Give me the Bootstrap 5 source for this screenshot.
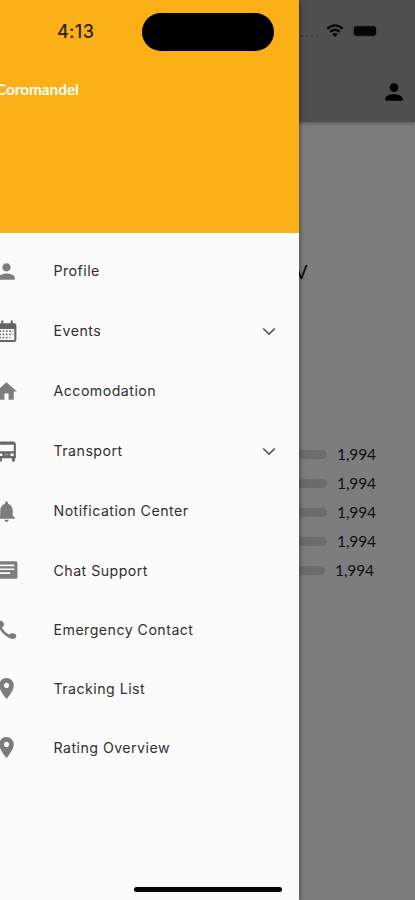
<!DOCTYPE html>
<html lang="en">
<head>
<meta charset="utf-8">
<meta name="viewport" content="width=device-width, initial-scale=1">
<title>Coromandel</title>
<link href="https://cdn.jsdelivr.net/npm/bootstrap@5.3.0/dist/css/bootstrap.min.css" rel="stylesheet">
<style>
  body { font-family: Inter, "Liberation Sans", sans-serif; background: #7d7d7d; }
  .phone { width: 415px; height: 900px; color: #0a0a0a; }
  .topbar { height: 122px; background: #4f4f4f; box-shadow: 0 1px 4px rgba(0,0,0,.35); }
  .status-right { height: 62px; padding-right: 35px; gap: 7px; }
  .signal { gap: 3px; padding-top: 9px; margin-right: 1px; }
  .signal i { width: 2px; height: 2px; border-radius: 50%; background: #383838; }
  .account { height: 60px; padding: 0 8px 0 0; }
  .page-title { height: 26px; margin-top: 137px; padding-left: 295px; font: 18.5px/26px Lato, sans-serif; }
  .stats { margin-top: 155px; }
  .stat { height: 29.1px; font: 400 15.5px/29px Lato, sans-serif; letter-spacing: -.1px; color: #111; }
  .track { width: 327px; height: 9px; border-radius: 5px; background: #6c6c6c; margin-right: 10px; }
  .stat:last-child .track { width: 325px; }
  .drawer { width: 298.5px; background: #fbfbfb; box-shadow: 0 0 6px rgba(0,0,0,.55); }
  .drawer-head { height: 233px; background: #fcb017; }
  .clock { height: 62px; padding-left: 57px; font-size: 18px; letter-spacing: .3px; font-weight: 500; line-height: 63px; color: #30230a; }
  .brand { margin-left: -4px; padding-top: 16px; font: 700 15.3px/22px Lato, sans-serif; letter-spacing: 0; color: #fff; }
  .menu { padding-top: 8px; }
  .entry { height: 60px; padding-right: 23px; font-size: 14.2px; letter-spacing: .46px; color: #303030; }
  .entry:nth-child(n+6) { height: 59px; }
  .entry .glyph { width: 25px; height: 25px; margin-left: -5.7px; margin-right: 34.2px; fill: #7d7d7d; flex: none; }
  .island { left: 142px; top: 12.5px; width: 132px; height: 38.5px; background: #000; }
  .home-bar { left: 134px; bottom: 8px; width: 148px; height: 5px; background: #050505; }
</style>
</head>
<body>
<div class="phone position-relative overflow-hidden">
  <main>
    <header class="topbar">
      <div class="status-right d-flex align-items-center justify-content-end">
        <div class="signal d-flex"><i></i><i></i><i></i><i></i></div>
        <svg width="18" height="14" viewBox="0 0 18 14" fill="none" stroke="#080808" stroke-width="2.3"><path d="M1.3 4.8Q9-2 16.7 4.8M4.2 7.8Q9 3.7 13.8 7.8"/><path d="M6.2 10.2Q9 7.7 11.8 10.2L9 13z" fill="#080808" stroke="none"/></svg>
        <svg width="29" height="14" viewBox="0 0 29 14"><rect x="1" y="1" width="25" height="12" rx="4" fill="#444"/><rect x="3" y="2.3" width="22" height="9.5" rx="2.5" fill="#050505"/><path d="M27 5v4q3-2 0-4" fill="#444"/></svg>
      </div>
      <div class="account d-flex align-items-center justify-content-end">
        <svg width="26" height="26" viewBox="0 0 24 24"><circle cx="12" cy="8" r="4"/><path d="M12 14c-2.67 0-8 1.34-8 4v2h16v-2c0-2.66-5.33-4-8-4z"/></svg>
      </div>
    </header>
    <div class="page-title">V</div>
    <div class="stats">
      <div class="stat d-flex align-items-center"><div class="track"></div>1,994</div>
      <div class="stat d-flex align-items-center"><div class="track"></div>1,994</div>
      <div class="stat d-flex align-items-center"><div class="track"></div>1,994</div>
      <div class="stat d-flex align-items-center"><div class="track"></div>1,994</div>
      <div class="stat d-flex align-items-center"><div class="track"></div>1,994</div>
    </div>
  </main>

  <aside class="drawer position-absolute top-0 start-0 h-100">
    <div class="drawer-head">
      <div class="clock">4:13</div>
      <div class="brand">Coromandel</div>
    </div>
    <nav class="menu d-flex flex-column">
      <div class="entry d-flex align-items-center">
        <svg class="glyph" viewBox="0 0 24 24"><path d="M12 12c2.21 0 4-1.79 4-4s-1.79-4-4-4-4 1.79-4 4 1.79 4 4 4zm0 2c-2.67 0-8 1.34-8 4v2h16v-2c0-2.66-5.33-4-8-4z"/></svg>Profile</div>
      <div class="entry d-flex align-items-center">
        <svg class="glyph" viewBox="0 0 24 24"><path fill="#646464" fill-rule="evenodd" d="M7 1.500h2V4h7V1.500h2V4h1.500Q21.500 4 21.500 6v14q0 2-2 2H4q-2 0-2-2V6q0-2 2-2h3zM4 9.500v10.700h15.500V9.500z"/><path fill="none" stroke="#777" stroke-width="1.700" stroke-dasharray="1.700 1.500" d="M5 11.700h13.500M5 14.800h13.500M5 17.900h10.500"/></svg>Events
        <svg class="ms-auto" width="14" height="9" viewBox="0 0 14 9" fill="none" stroke="#555" stroke-width="1.700"><path d="M1.200 1.500 7 7l5.800-5.500"/></svg></div>
      <div class="entry d-flex align-items-center">
        <svg class="glyph" viewBox="0 0 24 24"><path d="M10 20v-6h4v6h5v-8h3L12 3 2 12h3v8z"/></svg>Accomodation</div>
      <div class="entry d-flex align-items-center">
        <svg class="glyph" viewBox="0 0 24 24"><path fill="#666" fill-rule="evenodd" d="M7 2.500h11q3 0 3 3V18.500h-1V21.500h-2.800v-3H7.500v3H4.700v-3H3V5.500q0-3 4-3zM5 5.500v6.300h14V5.500zM5 14v2.300h3V14zM15.800 14v2.300h3V14z"/><path stroke="#aaa" stroke-width="1" d="M10 15h4"/></svg>Transport
        <svg class="ms-auto" width="14" height="9" viewBox="0 0 14 9" fill="none" stroke="#555" stroke-width="1.700"><path d="M1.200 1.500 7 7l5.800-5.500"/></svg></div>
      <div class="entry d-flex align-items-center">
        <svg class="glyph" viewBox="0 0 24 24"><path d="M12 22c1.100 0 2-.9 2-2h-4c0 1.100.89 2 2 2zm6-6v-5c0-3.070-1.640-5.640-4.500-6.320V4c0-.83-.67-1.500-1.500-1.500s-1.500.67-1.500 1.500v.68C7.630 5.360 6 7.920 6 11v5l-2 2v1h16v-1z"/></svg>Notification Center</div>
      <div class="entry d-flex align-items-center">
        <svg class="glyph" viewBox="0 0 24 24"><path fill-rule="evenodd" d="M2 3h19q1.500 0 1.500 1.500V18.500q0 1.500-1.500 1.500H2zM4 6.300v1.600h15.500V6.300zM4 10v1.600h15.500V10zM4 13.700v1.600h11.500v-1.600z"/></svg>Chat Support</div>
      <div class="entry d-flex align-items-center">
        <svg class="glyph" viewBox="0 0 24 24"><path d="M4 3.500H7Q9.800 4.500 9.600 7.500 9.300 9.600 7.600 10.200 9.800 14.300 14.600 16.900 16 15.200 18.500 15.600 21.500 16.200 21.300 18.700 21 21.200 17.800 21 13.800 20.500 11.200 18 6 14 4 9z"/></svg>Emergency Contact</div>
      <div class="entry d-flex align-items-center">
        <svg class="glyph" viewBox="0 0 24 24"><path d="M12 2C8.130 2 5 5.130 5 9c0 5.250 7 13 7 13s7-7.750 7-13c0-3.870-3.130-7-7-7zm0 9.500c-1.380 0-2.500-1.120-2.500-2.500s1.120-2.500 2.500-2.500 2.500 1.120 2.500 2.500-1.120 2.500-2.500 2.500z"/></svg>Tracking List</div>
      <div class="entry d-flex align-items-center">
        <svg class="glyph" viewBox="0 0 24 24"><path d="M12 2C8.130 2 5 5.130 5 9c0 5.250 7 13 7 13s7-7.750 7-13c0-3.870-3.130-7-7-7zm0 9.500c-1.380 0-2.500-1.120-2.500-2.500s1.120-2.500 2.500-2.500 2.500 1.120 2.500 2.500-1.120 2.500-2.500 2.500z"/></svg>Rating Overview</div>
    </nav>
  </aside>
  <div class="island position-absolute rounded-pill"></div>
  <div class="home-bar position-absolute rounded-pill"></div>
</div>
<script src="https://cdn.jsdelivr.net/npm/bootstrap@5.3.0/dist/js/bootstrap.bundle.min.js"></script>
</body>
</html>
